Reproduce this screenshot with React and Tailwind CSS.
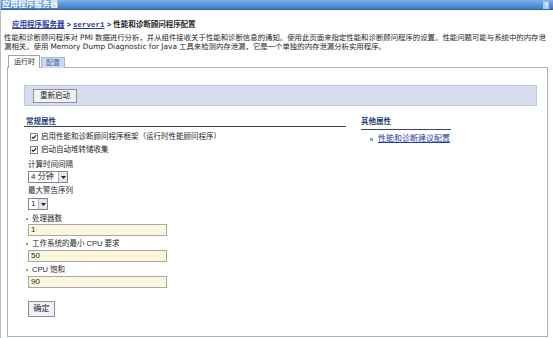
export default function App() {
  const font = { fontFamily: '"Liberation Sans", "Noto Sans CJK SC", sans-serif' };
  const latin = { fontFamily: '"DejaVu Sans", sans-serif' };

  return (
    <div
      className="w-[553px] h-[338px] overflow-hidden bg-white text-[7.5px] text-[#262626] border-l border-[#b8bcc4]"
      style={font}
    >
      {/* Title bar */}
      <div className="h-[10px] flex items-center justify-between bg-gradient-to-b from-[#7fb1e8] to-[#3c7acb] border-b border-[#2f5f9f]">
        <span className="pl-[1px] text-white font-bold text-[8px] leading-[9px]">应用程序服务器</span>
        <span className="mr-[4px] w-[6px] h-[8px] bg-[#a9c8ee] text-[6px] leading-[8px] text-white text-center font-bold">?</span>
      </div>

      {/* Breadcrumb */}
      <div className="mt-[10px] pl-[11px] h-[10px] leading-[10px] font-bold text-[7.5px]">
        <span className="text-[#2b3aa0] underline">应用程序服务器</span>
        <span> &gt; </span>
        <span className="text-[#2b3aa0] underline" style={{ fontFamily: '"Liberation Mono", monospace' }}>server1</span>
        <span> &gt; 性能和诊断顾问程序配置</span>
      </div>

      {/* Description */}
      <div className="mt-[3px] pl-[3px] pr-[2px] leading-[9px] text-[7.4px]">
        <div className="whitespace-nowrap">
          性能和诊断顾问程序对 <span style={latin}>PMI</span> 数据进行分析，并从组件接收关于性能和诊断信息的通知。使用此页面来指定性能和诊断顾问程序的设置。性能问题可能与系统中的内存泄
        </div>
        <div className="whitespace-nowrap">
          漏相关。使用 <span style={latin}>Memory Dump Diagnostic for Java</span> 工具来检测内存泄漏，它是一个单独的内存泄漏分析实用程序。
        </div>
      </div>

      {/* Tabs */}
      <div className="mt-[4px] ml-[7px] flex items-end h-[13px]">
        <div className="h-[13px] px-[4px] pl-[5px] bg-white border border-b-0 border-[#9ea6b4] leading-[12px] text-[7px] relative z-10">
          运行时
        </div>
        <div className="ml-[1px] h-[11px] px-[4px] bg-[#cdd9ee] border border-b-0 border-[#aab6cc] leading-[10px] text-[7px] text-[#3a6fb5]">
          配置
        </div>
      </div>

      {/* Panel */}
      <div className="ml-[6px] w-[541px] h-[270px] border border-[#aab0bc] -mt-px pl-[16px] pt-[17px]">
        {/* Button bar */}
        <div className="w-[513px] h-[21px] bg-[#d7dcef] border border-[#c2c8dc] flex items-center pl-[8px]">
          <button className="h-[14px] px-[6px] bg-[#f1f2f6] border border-[#8a909c] text-[7.5px] leading-[12px]">
            重新启动
          </button>
        </div>

        <div className="flex mt-[11px]">
          {/* General properties */}
          <div className="w-[322px]">
            <div className="h-[10px] leading-[9px] font-bold text-[#26407a] border-b border-[#3a4660]">
              <span className="pl-[2px]">常规属性</span>
            </div>

            <div className="mt-[4px] pl-[6px]">
              <div className="h-[12px] flex items-center gap-[3px]">
                <Check />
                <span>启用性能和诊断顾问程序框架（运行时性能顾问程序）</span>
              </div>
              <div className="mt-[1px] h-[12px] flex items-center gap-[3px]">
                <Check />
                <span>启动自动堆转储收集</span>
              </div>
            </div>

            <div className="pl-[4px]">
              <div className="mt-[4px] h-[10px] leading-[10px]">计算时间间隔</div>
              <Select value="4 分钟" width="w-[40px]" className="mt-[1px]" />
              <div className="mt-[3px] h-[10px] leading-[10px]">最大警告序列</div>
              <Select value="1" width="w-[20px]" className="mt-[2px]" />

              <Field label="处理器数" value="1" className="mt-[4px]" gap="mt-0" />
              <Field label="工作系统的最小 CPU 要求" value="50" className="mt-[3px]" gap="mt-[1px]" />
              <Field label="CPU 饱和" value="90" className="mt-[3px]" gap="mt-[1px]" />

              <button className="mt-[13px] h-[16px] w-[27px] bg-[#f1f2f6] border border-[#8a909c] text-[8px] leading-[14px]">
                确定
              </button>
            </div>
          </div>

          {/* Other properties */}
          <div className="ml-[15px] w-[90px]">
            <div className="h-[13px] leading-[10px] font-bold text-[#26407a] border-b border-[#3a4660]">
              其他属性
            </div>
            <div className="mt-[4px] pl-[9px] flex items-center gap-[5px] h-[10px]">
              <span className="w-[3px] h-[3px] bg-[#9aa6c0]"></span>
              <span className="text-[#2b3aa0] underline text-[8px]">性能和诊断建议配置</span>
            </div>
          </div>
        </div>
      </div>
    </div>
  );
}

function Check() {
  return (
    <span className="w-[8px] h-[8px] border border-[#7a7f88] bg-white flex items-center justify-center">
      <svg width="6" height="6" viewBox="0 0 6 6">
        <path d="M0.8 2.8 L2.3 4.4 L5.2 1.2" stroke="#202020" strokeWidth="1.2" fill="none" />
      </svg>
    </span>
  );
}

function Select({ value, width, className }) {
  return (
    <div className={`${className} ${width} h-[12px] border border-[#7f8590] bg-white flex items-center justify-between`}>
      <span className="pl-[2px] text-[8px] leading-[10px]">{value}</span>
      <span className="w-[9px] h-[10px] bg-[#e4e6ec] border-l border-[#b0b4bc] flex items-center justify-center">
        <svg width="5" height="3" viewBox="0 0 5 3">
          <path d="M0 0 H5 L2.5 3 Z" fill="#222" />
        </svg>
      </span>
    </div>
  );
}

function Field({ label, value, className, gap }) {
  return (
    <div className={className}>
      <div className="h-[10px] leading-[10px] flex items-center gap-[4px] -ml-[2px]">
        <span className="w-[2px] h-[2px] bg-[#6b7a55] rounded-full"></span>
        <span>{label}</span>
      </div>
      <div className={`${gap} w-[139px] h-[12px] bg-[#fcf7da] border border-[#a4a8ae] pl-[2px] text-[8px] leading-[10px]`}>
        {value}
      </div>
    </div>
  );
}
